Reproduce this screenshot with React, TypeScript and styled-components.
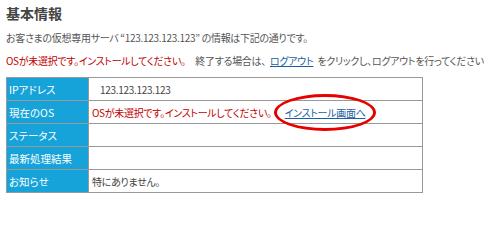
import React from "react";
import styled, { createGlobalStyle } from "styled-components";

const Global = createGlobalStyle`
  html, body { margin: 0; padding: 0; background: #fff; }
  body {
    font-family: "Noto Sans CJK JP", "Noto Sans", sans-serif;
    font-feature-settings: "palt";
  }
`;

const Page = styled.div`
  padding: 4px 6px 0 6px;
  width: 490px;
  box-sizing: border-box;
  overflow: hidden;
`;

const Title = styled.h2`
  margin: 0;
  font-size: 14px;
  line-height: 18px;
  font-weight: bold;
  color: #444;
`;

const Line = styled.p<{ $top: number }>`
  margin: ${(p) => p.$top}px 0 0 0;
  font-size: 10px;
  letter-spacing: -0.3px;
  line-height: 14px;
  color: #555;
  white-space: nowrap;
`;

const Red = styled.span`
  color: #c00000;
`;

const Link = styled.a<{ $gap?: number }>`
  color: #1a5fa0;
  text-decoration: underline;
  cursor: pointer;
  margin: 0 ${(p) => p.$gap ?? 0}px;
`;

const Table = styled.table`
  margin-top: 9px;
  width: 417px;
  border-collapse: collapse;
  border: 1px solid #999;
`;

const Label = styled.th`
  width: 79px;
  height: 22px;
  padding: 0 0 0 2px;
  background: #16a3d9;
  color: #fff;
  font-size: 10.5px;
  font-weight: normal;
  text-align: left;
  border: 1px solid #999;
  white-space: nowrap;
`;

const Value = styled.td<{ $indent?: number }>`
  height: 22px;
  padding: 0 0 0 ${(p) => 3 + (p.$indent ?? 0)}px;
  font-size: 10px;
  letter-spacing: -0.3px;
  color: #444;
  border: 1px solid #999;
  white-space: nowrap;
`;

const Circled = styled.span`
  position: relative;
  margin-left: 13px;
`;

const Ring = styled.span`
  position: absolute;
  left: -11px;
  top: -11px;
  right: -10px;
  bottom: -11px;
  border: 3.5px solid #e60000;
  border-radius: 50%;
  pointer-events: none;
`;

const rows: { label: string; value: React.ReactNode; indent?: number }[] = [
  { label: "IPアドレス", value: "123.123.123.123", indent: 8 },
  {
    label: "現在のOS",
    value: (
      <>
        <Red>OSが未選択です。インストールしてください。</Red>
        <Circled>
          <Link>インストール画面へ</Link>
          <Ring />
        </Circled>
      </>
    ),
  },
  { label: "ステータス", value: "" },
  { label: "最新処理結果", value: "" },
  { label: "お知らせ", value: "特にありません。" },
];

export default function App() {
  return (
    <>
      <Global />
      <Page>
        <Title>基本情報</Title>
        <Line $top={9}>
          お客さまの仮想専用サーバ “123.123.123.123” の情報は下記の通りです。
        </Line>
        <Line $top={9}>
          <Red>OSが未選択です。インストールしてください。</Red>
          {"\u3000"}終了する場合は、<Link $gap={4}>ログアウト</Link>をクリックし、ログアウトを行ってください
        </Line>
        <Table>
          <tbody>
            {rows.map((r) => (
              <tr key={r.label}>
                <Label>{r.label}</Label>
                <Value $indent={r.indent}>{r.value}</Value>
              </tr>
            ))}
          </tbody>
        </Table>
      </Page>
    </>
  );
}
